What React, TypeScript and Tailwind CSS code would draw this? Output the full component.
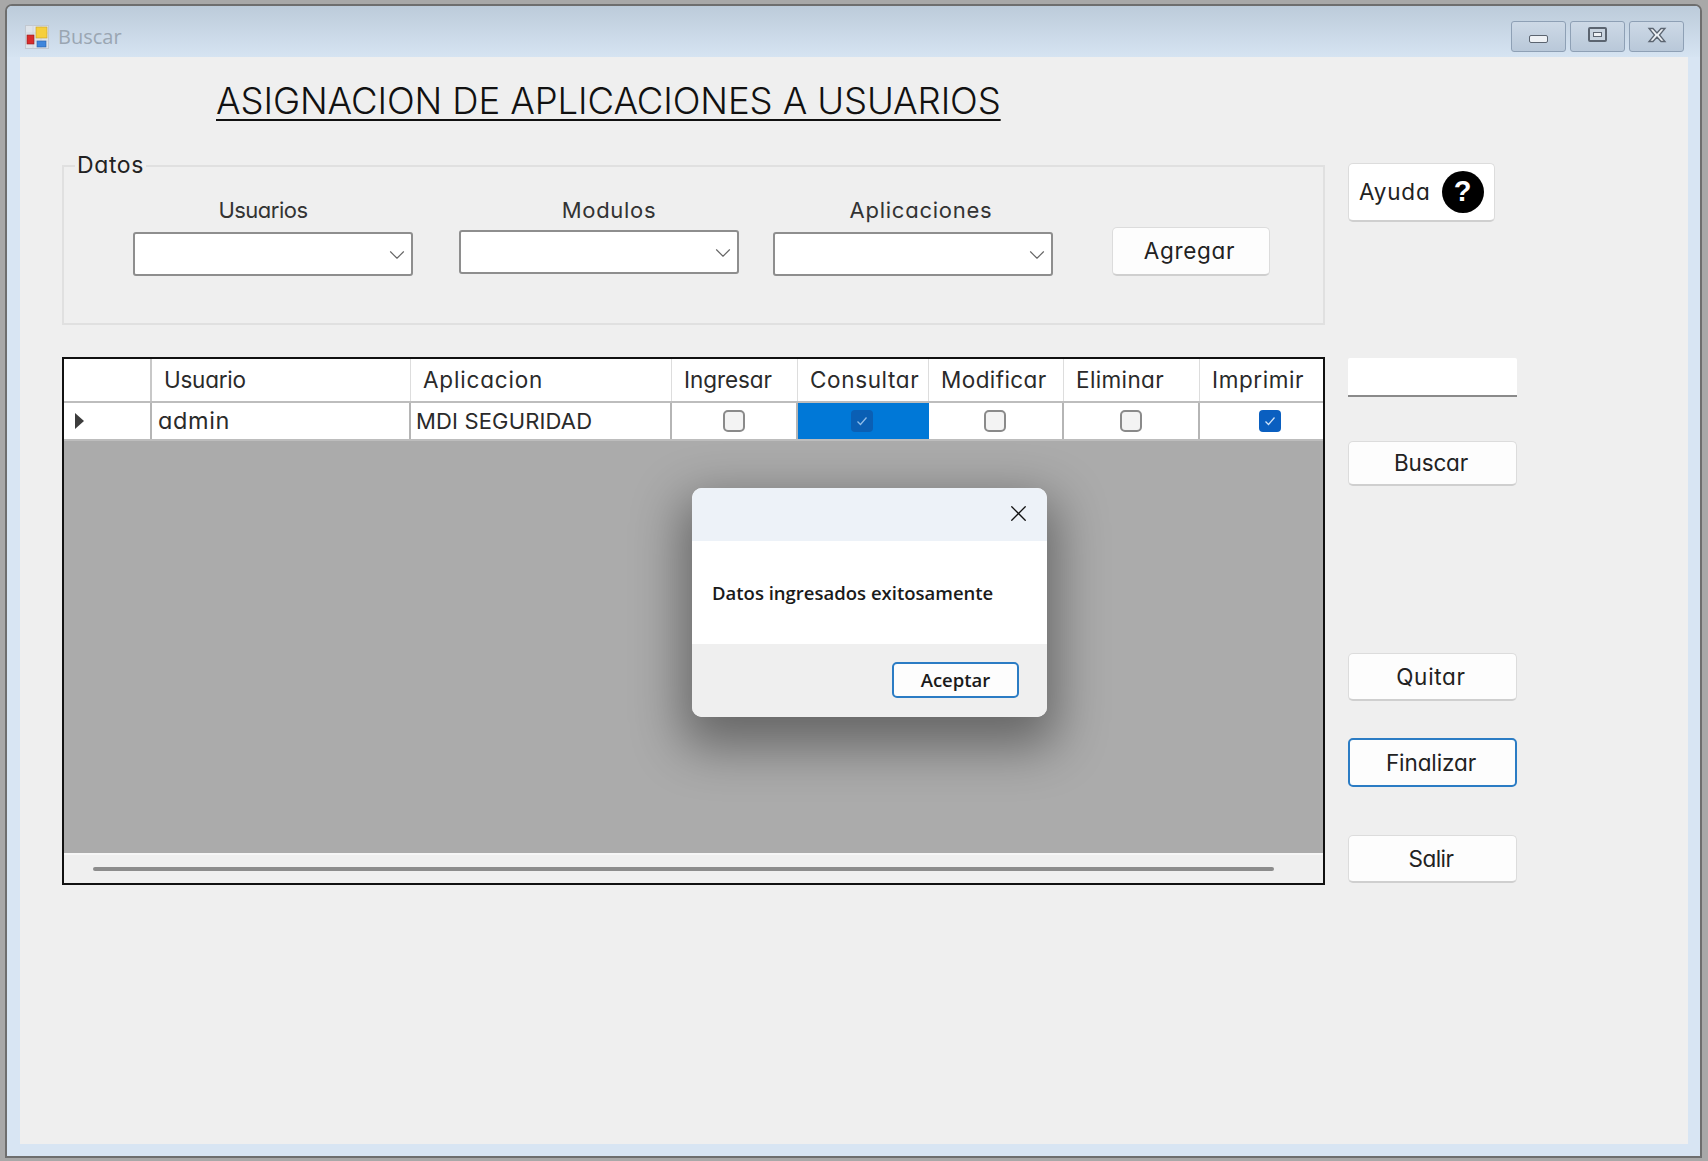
import type { ReactNode } from "react";
import { ChevronDown, X } from "lucide-react";

const gothic = "font-['Inter','Liberation_Sans',sans-serif] [font-feature-settings:'cv11']";

function Select({ className = "" }: { className?: string }) {
  return (
    <div className={`h-[44px] w-[280px] bg-white border-2 border-[#8e8e8e] rounded-[3px] flex items-center justify-end pr-[1px] ${className}`}>
      <ChevronDown size={26} strokeWidth={1.05} className="text-[#666666] mt-[2px]" />
    </div>
  );
}

function Btn({ label, className = "", focus = false }: { label: string; className?: string; focus?: boolean }) {
  return (
    <div
      className={`w-[169px] bg-[#fdfdfd] rounded-[5px] flex items-center justify-center pr-[3px] text-[22.5px] text-[#222222] ${
        focus ? "border-2 border-[#2b7cc4]" : "border border-[#dcdcdc] border-b-2 border-b-[#cfcfcf]"
      } ${className}`}
    >
      {label}
    </div>
  );
}

function Check({ checked = false, onBlue = false }: { checked?: boolean; onBlue?: boolean }) {
  if (checked) {
    return (
      <div className={`w-[22px] h-[22px] rounded-[4px] flex items-center justify-center ${onBlue ? "bg-[#0a5fb4]" : "bg-[#0a5fc0]"}`}>
        <svg width="14" height="14" viewBox="0 0 14 14" fill="none" stroke={onBlue ? "#8fbce8" : "#cfe2f7"} strokeWidth="1.3">
          <path d="M2.5 7.5l3 3 6-7" />
        </svg>
      </div>
    );
  }
  return <div className="w-[22px] h-[22px] rounded-[5px] bg-[#f3f3f3] border-2 border-[#8a8a8a]" />;
}

const headers = [
  { t: "Usuario", c: "tracking-[-0.26px]" },
  { t: "Aplicacion", c: "tracking-[0.83px]" },
  { t: "Ingresar", c: "tracking-[-0.06px]" },
  { t: "Consultar", c: "tracking-[0.64px]" },
  { t: "Modificar", c: "tracking-[0.42px]" },
  { t: "Eliminar", c: "tracking-[0.37px]" },
  { t: "Imprimir", c: "tracking-[0.59px]" },
];

const cols = "grid grid-cols-[88px_259px_261px_126px_131px_135px_136px_123px]";

function CaptionButton({ children }: { children: ReactNode }) {
  return (
    <div className="w-[55px] h-[31px] rounded-[3px] border border-[#8ea0b5] bg-gradient-to-b from-[#cdd9e6] to-[#b9c8d9] flex items-center justify-center">
      {children}
    </div>
  );
}

export default function App() {
  return (
    <div className={`w-[1708px] h-[1161px] bg-[#a8a8a8] pt-[4px] pl-[5px] overflow-hidden ${gothic}`}>
      <div className="w-[1697px] h-[1154px] border-2 border-[#6e6e6e] rounded-t-[7px] bg-[#d8e5f3] flex flex-col">
        <div className="h-[51px] shrink-0 bg-gradient-to-b from-[#bccbda] to-[#d6e4f2] flex items-center pt-[10px] pl-[18px] pr-[16px] rounded-t-[5px]">
          <svg width="24" height="24" viewBox="0 0 24 24" className="shrink-0">
            <rect x="0.5" y="0.5" width="23" height="23" fill="#dfe4ea" stroke="#c2c8d0" />
            <path d="M8 0v24M16 0v24M0 8h24M0 16h24" stroke="#c9ced6" strokeWidth="0.6" />
            <rect x="11" y="2" width="11" height="11" fill="#f6cf3c" stroke="#c9a227" strokeWidth="0.6" />
            <rect x="2" y="10" width="7" height="9" fill="#d92b2b" stroke="#8f1c1c" strokeWidth="0.6" />
            <rect x="12" y="16" width="9" height="6" fill="#3f86dc" stroke="#2a5fa8" strokeWidth="0.6" />
          </svg>
          <span className="ml-[9px] text-[20px] text-[#9aa6b2] font-['Open_Sans',sans-serif] [font-feature-settings:normal]">Buscar</span>
          <div className="ml-auto flex gap-[4px] -mt-[1px]">
            <CaptionButton>
              <div className="w-[19px] h-[8px] mt-[5px] rounded-[2px] bg-[#eef1f5] border border-[#5b6470]" />
            </CaptionButton>
            <CaptionButton>
              <div className="w-[19px] h-[15px] -mt-[3px] rounded-[2px] bg-[#c9d4e0] border-2 border-[#5b6470] flex items-center justify-center">
                <div className="w-[9px] h-[5px] border border-[#5b6470] bg-[#eef1f5]" />
              </div>
            </CaptionButton>
            <CaptionButton>
              <svg width="22" height="18" viewBox="0 0 22 18" className="-mt-[3px]">
                <path d="M3 2.5h4L11 7l4-4.5h4L13.5 9 19 15.5h-4L11 11l-4 4.5H3L8.5 9z" fill="#eef1f5" stroke="#5b6470" strokeWidth="1.3" />
              </svg>
            </CaptionButton>
          </div>
        </div>

        <div className="ml-[13px] mr-[12px] h-[1087px] bg-[#efefef] flex pl-[42px]">
          <div className="w-[1263px] shrink-0 flex flex-col">
            <div className="h-[108px] pl-[154px] pt-[22px]">
              <span className="text-[36.5px] leading-[44px] font-light tracking-[-0.1px] text-[#111111] underline underline-offset-[5px] decoration-[2px] whitespace-nowrap">
                ASIGNACION DE APLICACIONES A USUARIOS
              </span>
            </div>

            <div className="relative h-[160px] border-2 border-[#e0e0e0] shrink-0">
              <span className="absolute left-[11px] -top-[16px] bg-[#efefef] px-[2px] text-[23px] leading-[28px] tracking-[0.6px] text-[#222222]">Datos</span>
              <div className="flex items-start pt-[27px] pl-[69px] h-full">
                <div className="w-[280px] flex flex-col">
                  <div className="h-[38px] pt-[1px] pr-[20px] text-center text-[22px] leading-[30px] tracking-[-0.5px] text-[#333333]">Usuarios</div>
                  <Select />
                </div>
                <div className="w-[280px] ml-[46px] flex flex-col -mt-[2px]">
                  <div className="h-[38px] pt-[1px] pl-[20px] mt-[2px] text-center text-[22px] leading-[30px] tracking-[0.7px] text-[#333333]">Modulos</div>
                  <Select className="-mt-[2px]" />
                </div>
                <div className="w-[280px] ml-[34px] flex flex-col">
                  <div className="h-[38px] pt-[1px] pl-[16px] text-center text-[22px] leading-[30px] tracking-[0.75px] text-[#333333]">Aplicaciones</div>
                  <Select />
                </div>
                <Btn label="Agregar" className="!w-[158px] h-[49px] ml-[59px] mt-[33px] tracking-[0.7px]" />
              </div>
            </div>

            <div className="mt-[32px] h-[528px] border-2 border-[#111111] bg-[#ababab] flex flex-col shrink-0">
              <div className={`${cols} h-[44px] bg-white border-b-2 border-b-[#bdbdbd] shrink-0`}>
                <div className="border-r-2 border-r-[#c8c8c8]" />
                {headers.map((h, i) => (
                  <div
                    key={h.t}
                    className={`pl-[12px] flex items-center whitespace-nowrap text-[22.5px] text-[#2a2a2a] ${h.c} ${i < 6 ? "border-r border-r-[#dddddd]" : ""}`}
                  >
                    {h.t}
                  </div>
                ))}
              </div>
              <div className={`${cols} h-[38px] bg-white border-b-2 border-b-[#bdbdbd] shrink-0`}>
                <div className="border-r-2 border-r-[#b5b5b5] flex items-center pl-[11px]">
                  <svg width="10" height="16" viewBox="0 0 10 16"><path d="M0 0l9 8-9 8z" fill="#3c3c3c" /></svg>
                </div>
                <div className="border-r-2 border-r-[#b5b5b5] pl-[6px] flex items-center text-[23.5px] tracking-[0.6px] text-[#2a2a2a]">admin</div>
                <div className="border-r-2 border-r-[#b5b5b5] pl-[5px] flex items-center whitespace-nowrap text-[22px] tracking-[0.15px] text-[#2a2a2a]">MDI SEGURIDAD</div>
                <div className="border-r-2 border-r-[#b5b5b5] flex items-center justify-center"><Check /></div>
                <div className="bg-[#0078d7] flex items-center justify-center pr-[3px]"><Check checked onBlue /></div>
                <div className="border-r-2 border-r-[#b5b5b5] flex items-center justify-center pr-[1px]"><Check /></div>
                <div className="border-r-2 border-r-[#b5b5b5] flex items-center justify-center"><Check /></div>
                <div className="flex items-center justify-center pl-[16px]"><Check checked /></div>
              </div>
              <div className="flex-1 relative">
                <div className="absolute left-[628px] top-[47px] w-[355px] h-[229px] rounded-[10px] overflow-hidden bg-white shadow-[0_20px_50px_10px_rgba(0,0,0,0.4)] flex flex-col font-['Open_Sans',sans-serif] [font-feature-settings:normal]">
                  <div className="h-[53px] bg-[#edf2f8] flex items-center justify-end pr-[15px] pb-[3px] shrink-0">
                    <X size={27} strokeWidth={1.15} className="text-[#111111]" />
                  </div>
                  <div className="h-[103px] bg-white flex items-center pl-[20px] text-[18.5px] font-semibold text-[#1a1a1a] shrink-0">
                    Datos ingresados exitosamente
                  </div>
                  <div className="flex-1 bg-[#efefef] flex justify-end pt-[18px] pr-[28px]">
                    <div className="w-[127px] h-[36px] bg-[#fdfdfd] border-2 border-[#2b7cc4] rounded-[5px] flex items-center justify-center text-[18.5px] font-semibold text-[#1a1a1a]">Aceptar</div>
                  </div>
                </div>
              </div>
              <div className="h-[30px] bg-[#efefef] border-t-2 border-t-[#f6f6f6] flex items-center pl-[29px] shrink-0">
                <div className="w-[1181px] h-[4px] rounded-full bg-[#8c8c8c]" />
              </div>
            </div>
          </div>

          <div className="ml-[23px] w-[169px] flex flex-col">
            <div className="mt-[106px] w-[147px] h-[59px] bg-white rounded-[5px] border border-[#dcdcdc] border-b-2 border-b-[#cfcfcf] flex items-center pl-[10px] text-[22.5px] tracking-[0.8px] text-[#222222]">
              <span>Ayuda</span>
              <div className="ml-auto mr-[10px] w-[42px] h-[42px] rounded-full bg-black flex items-center justify-center text-white text-[29px] font-bold font-['Liberation_Sans',sans-serif] [font-feature-settings:normal]">?</div>
            </div>
            <div className="mt-[136px] h-[39px] bg-white border-b-2 border-b-[#8a8a8a] rounded-t-[2px]" />
            <Btn label="Buscar" className="h-[45px] mt-[44px] tracking-[-0.15px]" />
            <Btn label="Quitar" className="h-[48px] mt-[167px] tracking-[0.7px]" />
            <Btn label="Finalizar" focus className="h-[49px] mt-[37px] tracking-[-0.1px]" />
            <Btn label="Salir" className="h-[48px] mt-[48px] tracking-[-0.5px]" />
          </div>
        </div>
      </div>
    </div>
  );
}
